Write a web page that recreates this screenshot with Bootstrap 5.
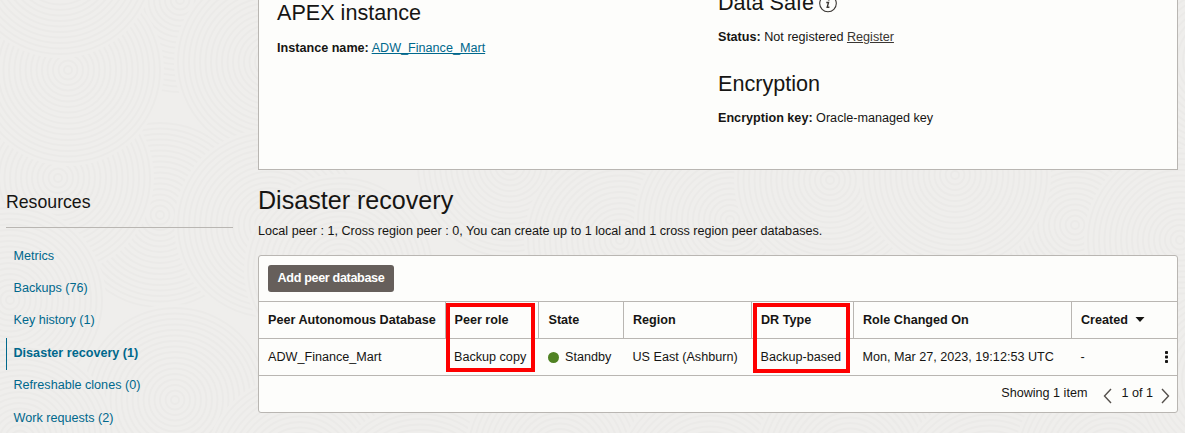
<!DOCTYPE html>
<html lang="en">
<head>
<meta charset="utf-8">
<title>Disaster recovery</title>
<link href="https://cdn.jsdelivr.net/npm/bootstrap@5.3.0/dist/css/bootstrap.min.css" rel="stylesheet">
<style>
body{font-family:"Liberation Sans",Arial,sans-serif;font-size:12.62px;line-height:16px;color:#161513;background:#efeeec;height:433px;overflow:hidden}
.backdrop{left:0;top:0;z-index:-1}
.shell{height:433px}
.side{width:233px;padding:191px 0 0 6px}
.side-title{font-size:17.7px;line-height:22px;padding-bottom:14px;border-bottom:1px solid #b9b6b2;margin-bottom:12.600px}
.side .nav-link{color:#00688c;padding:0 0 0 7.5px;height:32.4px;line-height:31px}
.side .nav-link.active{font-weight:700;box-shadow:inset 1px 0 #00688c}
.main{width:920px;margin-left:25px}
.panel{background:#fdfdfb;border:1px solid #b9b6b2}
.info{height:170px;border-top:0}
.info-a{width:459px;padding-left:18px}
.info h2{font-size:21.6px;line-height:26px;font-weight:400;margin:0}
.info h2.up{margin-top:-10px}
.info p{margin:14px 0 0}
.info h2.up + p{margin-top:13px}
.info h2.enc{margin-top:26px}
.info h2.enc + p{margin-top:13px}
.teal{color:#00688c}
.ink{color:#3a3632}
h1{font-size:25.1px;line-height:30px;font-weight:400;margin:15px 0 0}
.note{margin:8px 0 16px}
.list-panel{border-radius:3px;height:158px}
.toolbar{height:45px;padding:9px}
.btn-peer,.btn-peer:hover{background:#665f5b;color:#fff;font-weight:700;font-size:12.62px;letter-spacing:-.35px;line-height:16px;width:126px;height:27px;padding:0 0 2px;border:0;border-radius:3px}
.peers{width:918px;table-layout:fixed;color:inherit}
.peers th,.peers td{height:37px;padding:0 0 1px 9px;border-top:1px solid #b9b6b2;white-space:nowrap;vertical-align:middle}
.peers th{border-right:1px solid #b9b6b2;font-weight:700}
.peers th:last-child{border-right:0}
.peers tbody tr{border-bottom:1px solid #b9b6b2}
.peers th:nth-child(3),.peers td:nth-child(3){padding-left:10px}
.peers th:nth-child(n+4),.peers td:nth-child(n+4){padding-left:9.500px}
.dot{width:11px;height:11px;border-radius:50%;background:#508223;margin-right:6px;margin-top:2px}
.pager{height:35px;padding:0 7px 2px 0}
.chev-prev{margin:6px 9px 0 16px}
.chev-next{margin:6px 0 0 8px}
.mark-box{border:4px solid #fe0000;pointer-events:none}
.mark-role{left:187px;top:47px;width:89px;height:69px}
.mark-type{left:494px;top:47px;width:97px;height:70px}
</style>
</head>
<body>
<svg class="backdrop position-absolute" width="1185" height="433" aria-hidden="true">
  <defs>
    <g id="rings" fill="none" stroke="#ebeae8" stroke-width="1.9">
      <circle r="96" fill="#efeeec" stroke="none"/><circle r="92"/><circle r="86.500"/><circle r="81"/><circle r="75.500"/><circle r="70"/><circle r="64.500"/><circle r="59"/><circle r="53.500"/><circle r="48"/><circle r="42.500"/><circle r="37"/><circle r="31.500"/><circle r="26"/><circle r="20.500"/><circle r="15"/><circle r="9.500"/><circle r="4"/>
    </g>
  </defs>
  <g>
    <use href="#rings" x="180" y="0"/><use href="#rings" x="-30" y="80"/><use href="#rings" x="160" y="215"/><use href="#rings" x="58" y="178"/><use href="#rings" x="270" y="62"/><use href="#rings" x="68" y="70"/><use href="#rings" x="60" y="-38"/><use href="#rings" x="10" y="300"/><use href="#rings" x="270" y="225"/><use href="#rings" x="175" y="400"/><use href="#rings" x="20" y="440"/>
    <use href="#rings" x="340" y="270"/><use href="#rings" x="510" y="165"/><use href="#rings" x="620" y="240"/><use href="#rings" x="730" y="220"/><use href="#rings" x="830" y="180"/><use href="#rings" x="1075" y="225"/><use href="#rings" x="955" y="175"/><use href="#rings" x="1180" y="240"/>
    <use href="#rings" x="300" y="470"/><use href="#rings" x="420" y="500"/><use href="#rings" x="560" y="455"/><use href="#rings" x="710" y="480"/><use href="#rings" x="850" y="460"/><use href="#rings" x="990" y="490"/><use href="#rings" x="1110" y="460"/><use href="#rings" x="1230" y="380"/><use href="#rings" x="1220" y="60"/>
  </g>
</svg>
<div class="shell d-flex">
  <aside class="side flex-shrink-0">
    <div class="side-title">Resources</div>
    <nav class="nav flex-column">
      <a class="nav-link" href="#">Metrics</a>
      <a class="nav-link" href="#">Backups (76)</a>
      <a class="nav-link" href="#">Key history (1)</a>
      <a class="nav-link active" href="#">Disaster recovery (1)</a>
      <a class="nav-link" href="#">Refreshable clones (0)</a>
      <a class="nav-link" href="#">Work requests (2)</a>
    </nav>
  </aside>
  <main class="main flex-shrink-0">
    <section class="panel info d-flex">
      <div class="info-a">
        <h2>APEX instance</h2>
        <p><b>Instance name:</b> <a class="teal" href="#">ADW_Finance_Mart</a></p>
      </div>
      <div>
        <h2 class="up d-flex align-items-center">Data Safe
          <svg class="ms-1" width="20" height="20" viewBox="0 0 20 20"><circle cx="10" cy="10.500" r="8.3" fill="none" stroke="#3a3632" stroke-width="1.1"/><circle cx="10.800" cy="6.500" r="1.1" fill="#3a3632"/><path d="M8.300 9.500h2.200L9.200 14.300h2.200" fill="none" stroke="#3a3632" stroke-width="1.4"/></svg>
        </h2>
        <p><b>Status:</b> Not registered <a class="ink" href="#">Register</a></p>
        <h2 class="enc">Encryption</h2>
        <p><b>Encryption key:</b> Oracle-managed key</p>
      </div>
    </section>
    <h1>Disaster recovery</h1>
    <p class="note">Local peer : 1, Cross region peer : 0, You can create up to 1 local and 1 cross region peer databases.</p>
    <section class="panel list-panel position-relative">
      <div class="toolbar"><button class="btn btn-peer d-block" type="button">Add peer database</button></div>
      <table class="peers">
        <colgroup><col style="width:186px"><col style="width:93px"><col style="width:85px"><col style="width:128px"><col style="width:102px"><col style="width:218px"><col style="width:106px"></colgroup>
        <thead><tr><th>Peer Autonomous Database</th><th>Peer role</th><th>State</th><th>Region</th><th>DR Type</th><th>Role Changed On</th>
          <th>Created <svg class="ms-1" width="10" height="6" viewBox="0 0 10 6"><path d="M.5 0h9L5 5z" fill="#161513"/></svg></th></tr></thead>
        <tbody><tr><td>ADW_Finance_Mart</td><td>Backup copy</td>
          <td><span class="d-flex align-items-center"><i class="dot"></i>Standby</span></td>
          <td>US East (Ashburn)</td><td>Backup-based</td><td>Mon, Mar 27, 2023, 19:12:53 UTC</td>
          <td><span class="d-flex align-items-center justify-content-between pe-2"><span>-</span><svg width="5" height="14" viewBox="0 0 5 14" fill="#161513"><rect x="1" y="1" width="3" height="3" rx=".8"/><rect x="1" y="5.500" width="3" height="3" rx=".8"/><rect x="1" y="10" width="3" height="3" rx=".8"/></svg></span></td></tr></tbody>
      </table>
      <div class="pager d-flex align-items-center justify-content-end">
        <span>Showing 1 item</span>
        <svg class="chev-prev" width="9" height="16" viewBox="0 0 9 16" fill="none" stroke="#55504c" stroke-width="1.4"><path d="M8 1L1.500 8 8 15"/></svg>
        <span>1 of 1</span>
        <svg class="chev-next" width="9" height="16" viewBox="0 0 9 16" fill="none" stroke="#55504c" stroke-width="1.4"><path d="M1 1l6.500 7L1 15"/></svg>
      </div>
      <div class="mark-box mark-role position-absolute"></div>
      <div class="mark-box mark-type position-absolute"></div>
    </section>
  </main>
</div>
<script src="https://cdn.jsdelivr.net/npm/bootstrap@5.3.0/dist/js/bootstrap.bundle.min.js"></script>
</body>
</html>
